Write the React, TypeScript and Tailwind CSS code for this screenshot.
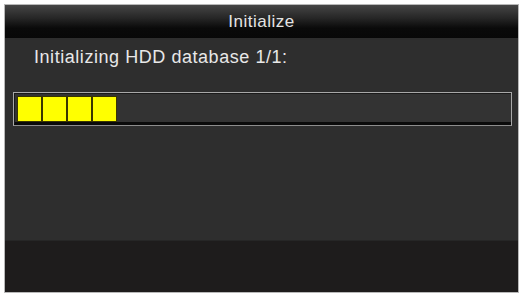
export default function App() {
  const blocks = [0, 1, 2, 3];
  return (
    <div className="w-[521px] h-[295px] bg-white pt-[4px] pl-[4px] pr-[2px] pb-[2px]">
      <div className="w-[515px] h-[289px] border border-[#b8b8b8] flex flex-col overflow-hidden" style={{ fontFamily: '"Liberation Sans", Arial, sans-serif' }}>
        {/* TITLE BAR */}
        <div className="h-[33px] shrink-0 flex items-center justify-center bg-[linear-gradient(to_bottom,#454545_0%,#262626_40%,#0a0a0a_70%,#080808_100%)]">
          <span className="text-[17px] text-[#e4e4e4] tracking-[0.5px]">Initialize</span>
        </div>

        {/* BODY */}
        <div className="flex-1 bg-[#2e2e2e] flex flex-col">
          <div className="pl-[29px] pt-[8px] h-[54px] text-[18px] text-[#e8e8e8] leading-[22px] tracking-[0.55px]">
            Initializing HDD database 1/1:
          </div>
          <div className="ml-[8px] mr-[6px] h-[34px] border border-[#a8a8a8] border-b-[#8c8c8c] bg-[#333333] flex items-stretch">
            <div className="flex-1 flex items-stretch border-b-[3px] border-b-[#0a0a0a] border-t border-t-[#1a1a1a] border-l border-l-[#1a1a1a] pl-[2px] pt-[2px]">
              {blocks.map((b) => (
                <div key={b} className="w-[25px] h-[26px] bg-[#ffff00] border border-[#3a3600]" />
              ))}
            </div>
          </div>
        </div>

        {/* FOOTER */}
        <div className="h-[52px] shrink-0 bg-[#1e1c1c] border-t border-t-[#262626]" />
      </div>
    </div>
  );
}
